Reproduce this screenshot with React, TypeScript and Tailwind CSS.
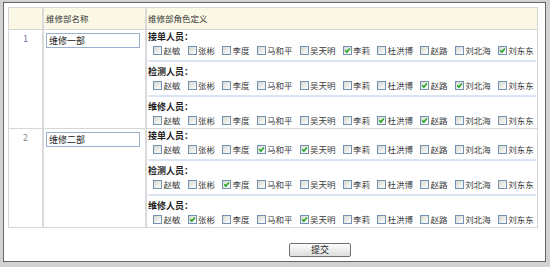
const NAMES = ["赵敏", "张彬", "李度", "马和平", "吴天明", "李莉", "杜洪博", "赵路", "刘北海", "刘东东"];

const ROWS = [
  {
    no: "1",
    noColor: "text-[#77739c]",
    name: "维修一部",
    groups: [
      { label: "接单人员：", checked: ["李莉", "刘东东"] },
      { label: "检测人员：", checked: ["赵路", "刘北海"] },
      { label: "维修人员：", checked: ["杜洪博", "赵路"] },
    ],
  },
  {
    no: "2",
    noColor: "text-[#8a8a8a]",
    name: "维修二部",
    groups: [
      { label: "接单人员：", checked: ["马和平", "吴天明"] },
      { label: "检测人员：", checked: ["李度"] },
      { label: "维修人员：", checked: ["张彬", "吴天明"] },
    ],
  },
];

const CheckBox = ({ checked }: { checked: boolean }) => (
  <span className="relative inline-block h-[9px] w-[9px] shrink-0 border border-[#7391b3] bg-linear-to-br from-[#d9d9d2] to-[#fdfdfb]">
    {checked && (
      <svg viewBox="0 0 7 7" className="absolute left-0 top-0 h-[7px] w-[7px]">
        <path d="M1.2 3.4 L2.9 5.1 L5.9 1.6" stroke="#1fa51f" strokeWidth="1.5" fill="none" />
      </svg>
    )}
  </span>
);

const Group = ({ label, checked, first, last }: { label: string; checked: string[]; first: boolean; last: boolean }) => (
  <div className={`${first ? "" : "pt-[3px]"} ${last ? "" : "border-b-2 border-[#dae5f3] pb-[3px]"}`}>
    <div className="h-[13px] whitespace-nowrap text-[9px] leading-[13px] font-bold text-[#1e1e1e]">{label}</div>
    <div className="flex h-[14px] items-center whitespace-nowrap pl-[5px]">
      {NAMES.map((n) => (
        <div key={n} className="mr-[7px] flex shrink-0 items-center">
          <CheckBox checked={checked.includes(n)} />
          <span className="ml-[1.5px] text-[8.5px] leading-[14px] text-[#3a3a3a]">{n}</span>
        </div>
      ))}
    </div>
  </div>
);

export default function App() {
  return (
    <div className="flex h-[267px] w-[550px] flex-col bg-[#d2d2d2] pt-[2px] pl-[3px] pr-[4px] pb-[5px] font-['Noto_Sans_CJK_SC','Noto_Sans',sans-serif] text-[8.5px]">
      <div className="flex-1 border border-[#666] bg-white pt-[4px] pl-[4px]">
        <div className="w-[530px] border border-[#d6d6d6]">
          <div className="flex h-[22px] border-b border-[#d6d6d6] bg-[#fbf9e6] text-[#333]">
            <div className="w-[35px] shrink-0 border-r-2 border-[#dadada]" />
            <div className="flex w-[103px] shrink-0 items-center border-r-2 border-[#dadada] pl-[2px]">维修部名称</div>
            <div className="flex flex-1 items-center pl-[1px]">维修部角色定义</div>
          </div>
          {ROWS.map((r, i) => (
            <div key={r.no} className={`flex ${i < ROWS.length - 1 ? "border-b border-[#d6d6d6]" : ""}`}>
              <div className={`w-[35px] shrink-0 border-r-2 border-[#dadada] pt-[2px] text-center text-[9px] leading-[13px] ${r.noColor}`}>{r.no}</div>
              <div className="w-[103px] shrink-0 border-r-2 border-[#dadada] pt-[3px] pl-[2px]">
                <input
                  readOnly
                  value={r.name}
                  className="h-[15px] w-[94px] border border-[#99b1cf] px-[2px] text-[9px] leading-[13px] text-[#222] outline-none"
                />
              </div>
              <div className="min-w-0 flex-1 px-[1px] pb-[1px]">
                {r.groups.map((g, j) => (
                  <Group key={g.label} label={g.label} checked={g.checked} first={j === 0} last={j === r.groups.length - 1} />
                ))}
              </div>
            </div>
          ))}
        </div>
        <div className="pt-[15px] pl-[281px]">
          <button className="h-[14px] w-[62px] rounded-[2px] border border-[#6f6f6f] bg-linear-to-b from-[#fdfdfd] to-[#dedede] text-[9px] leading-[12px] text-[#222]">
            提交
          </button>
        </div>
      </div>
    </div>
  );
}
